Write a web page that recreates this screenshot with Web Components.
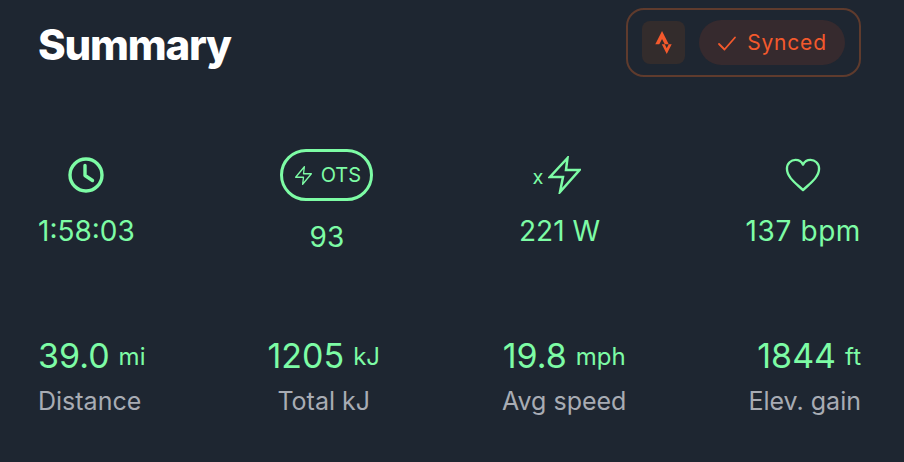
<!DOCTYPE html>
<html>
<head>
<meta charset="utf-8">
<style>
  html, body { margin: 0; background: #1e2631; }
  body { font-family: "Inter", "Liberation Sans", sans-serif; }
</style>
</head>
<body>
<summary-card>
  <span slot="title">Summary</span>
  <sync-status slot="status">Synced</sync-status>
  <stat-row slot="top">
    <icon-stat value="1:58:03"><svg width="38" height="38" viewBox="0 0 38 38" fill="none" stroke="currentColor" stroke-width="3.4" stroke-linecap="round" stroke-linejoin="round"><circle cx="19" cy="19" r="16"/><path d="M18 9.500v10l7.500 5"/></svg></icon-stat>
    <icon-stat value="93"><ots-badge></ots-badge></icon-stat>
    <icon-stat value="221 W"><watts-icon></watts-icon></icon-stat>
    <icon-stat value="137 bpm" style="--value-spacing: 0.6px"><svg width="36" height="34" viewBox="0 0 38 36" fill="none" stroke="currentColor" stroke-width="2.500" stroke-linejoin="round"><path d="M19 34 C13 28 2 21 2 11.500 C2 5.500 6.500 2 11 2 C14.500 2 17.500 4 19 7 C20.500 4 23.500 2 27 2 C31.500 2 36 5.500 36 11.500 C36 21 25 28 19 34Z"/></svg></icon-stat>
  </stat-row>
  <stat-row slot="bottom">
    <metric-stat value="39.0" unit="mi" label="Distance" align="flex-start"></metric-stat>
    <metric-stat value="1205" unit="kJ" label="Total kJ" align="center"></metric-stat>
    <metric-stat value="19.8" unit="mph" label="Avg speed" align="center"></metric-stat>
    <metric-stat value="1844" unit="ft" label="Elev. gain" align="flex-end"></metric-stat>
  </stat-row>
</summary-card>

<script>
class SummaryCard extends HTMLElement {
  constructor() {
    super();
    this.attachShadow({ mode: 'open' });
    this.shadowRoot.innerHTML = `
      <style>
        :host { display: block; box-sizing: border-box; width: 904px; height: 462px; padding: 8px 43px 0 38px; color: #fff; overflow: hidden; }
        header { display: flex; justify-content: space-between; align-items: center; height: 69px; }
        .title { font-size: 42px; font-weight: 800; letter-spacing: -1.2px; padding-top: 4px; }
        .top { margin-top: 72px; }
        .bottom { margin-top: 80px; }
      </style>
      <header><div class="title"><slot name="title"></slot></div><slot name="status"></slot></header>
      <div class="top"><slot name="top"></slot></div>
      <div class="bottom"><slot name="bottom"></slot></div>`;
  }
}

class SyncStatus extends HTMLElement {
  constructor() {
    super();
    this.attachShadow({ mode: 'open' });
    this.shadowRoot.innerHTML = `
      <style>
        :host { display: flex; align-items: center; gap: 14px; box-sizing: border-box; width: 235px; height: 69px; padding: 0 14px; border: 2px solid #5f3b2d; border-radius: 18px; color: #f4592c; }
        .logo { width: 43px; height: 43px; border-radius: 8px; background: #332c2c; display: flex; align-items: center; justify-content: center; }
        .pill { width: 146px; height: 45px; border-radius: 23px; background: #362a2e; display: flex; align-items: center; justify-content: center; gap: 10px; font-size: 21px; letter-spacing: 0.8px; }
      </style>
      <div class="logo"><svg width="23" height="23" viewBox="0 0 24 24" fill="currentColor"><path d="M15.387 17.944l-2.089-4.116h-3.065L15.387 24l5.15-10.172h-3.066m-7.008-5.599l2.836 5.598h4.172L10.463 0l-7 13.828h4.169"/></svg></div>
      <div class="pill"><svg width="20" height="20" viewBox="0 0 20 20" fill="none" stroke="currentColor" stroke-width="1.800" stroke-linecap="round" stroke-linejoin="round"><path d="M2 11l5.500 5.500L18 4.500"/></svg><span><slot></slot></span></div>`;
  }
}

class StatRow extends HTMLElement {
  constructor() {
    super();
    this.attachShadow({ mode: 'open' });
    this.shadowRoot.innerHTML = `
      <style>:host { display: flex; justify-content: space-between; align-items: center; }</style>
      <slot></slot>`;
  }
}

class IconStat extends HTMLElement {
  constructor() {
    super();
    this.attachShadow({ mode: 'open' });
  }
  connectedCallback() {
    this.shadowRoot.innerHTML = `
      <style>
        :host { display: flex; flex-direction: column; align-items: center; gap: 18px; color: #7dfca5; }
        .icon { display: flex; align-items: center; justify-content: center; min-height: 40px; }
        .value { font-size: 28px; font-weight: 400; letter-spacing: var(--value-spacing, 0); line-height: 36px; white-space: nowrap; }
      </style>
      <div class="icon"><slot></slot></div>
      <div class="value">${this.getAttribute('value')}</div>`;
  }
}

class OtsBadge extends HTMLElement {
  constructor() {
    super();
    this.attachShadow({ mode: 'open' });
    this.shadowRoot.innerHTML = `
      <style>
        :host { display: flex; align-items: center; justify-content: center; gap: 7px; box-sizing: border-box; width: 93px; height: 52px; border: 3px solid #7dfca5; border-radius: 26px; color: #7dfca5; font-size: 20px; font-weight: 400; }
      </style>
      <svg width="21" height="21" viewBox="0 0 24 24" fill="none" stroke="currentColor" stroke-width="1.500" stroke-linejoin="round" stroke-linecap="round"><path d="M13 2L3 14h9l-1 8 10-12h-9l1-8z"/></svg>
      <span>OTS</span>`;
  }
}

class WattsIcon extends HTMLElement {
  constructor() {
    super();
    this.attachShadow({ mode: 'open' });
    this.shadowRoot.innerHTML = `
      <style>
        :host { display: flex; align-items: center; gap: 5px; padding-right: 5px; color: #7dfca5; font-size: 20px; font-weight: 400; }
        span { margin-top: 3px; }
      </style>
      <span>x</span>
      <svg width="33" height="38" viewBox="0 0 33 38" fill="none" stroke="currentColor" stroke-width="2.500" stroke-linejoin="miter"><path d="M19.500 2L2 21h13l-3 15 19.500-22H18z"/></svg>`;
  }
}

class MetricStat extends HTMLElement {
  constructor() {
    super();
    this.attachShadow({ mode: 'open' });
  }
  connectedCallback() {
    const align = this.getAttribute('align');
    this.shadowRoot.innerHTML = `
      <style>
        :host { display: flex; flex-direction: column; align-items: ${align}; gap: 2px; }
        .top { color: #7dfca5; white-space: nowrap; line-height: 42px; }
        .value { font-size: 34px; }
        .unit { font-size: 24px; font-weight: 400; margin-left: 9px; vertical-align: 3px; }
        .label { font-size: 25px; line-height: 32px; color: #a8acb4; white-space: nowrap; }
      </style>
      <div class="top"><span class="value">${this.getAttribute('value')}</span><span class="unit">${this.getAttribute('unit')}</span></div>
      <div class="label">${this.getAttribute('label')}</div>`;
  }
}

customElements.define('summary-card', SummaryCard);
customElements.define('sync-status', SyncStatus);
customElements.define('stat-row', StatRow);
customElements.define('icon-stat', IconStat);
customElements.define('ots-badge', OtsBadge);
customElements.define('watts-icon', WattsIcon);
customElements.define('metric-stat', MetricStat);
</script>
</body>
</html>
